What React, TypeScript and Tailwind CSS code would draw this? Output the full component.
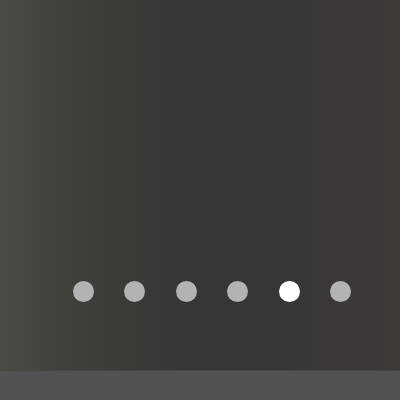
export default function App() {
    const dots = [0, 1, 2, 3, 4, 5];
    const active = 4;

    return (
        <div className="w-[400px] h-[400px] flex flex-col overflow-hidden">
            {/* Slide area */}
            <div className="h-[370px] flex flex-col justify-end pb-[68px] bg-[linear-gradient(90deg,#4a4a45_0%,#3e3e3c_20%,#363636_45%,#373636_70%,#3c3939_100%)]">
                <div className="flex items-center gap-[30.5px] pl-[72.5px]">
                    {dots.map((d) => (
                        <div
                            key={d}
                            className={`w-[21px] h-[21px] rounded-full ${d === active ? "bg-white" : "bg-[#b3b3b3]"}`}
                        />
                    ))}
                </div>
            </div>

            {/* Bottom bar */}
            <div className="flex-1 bg-[#525252] border-t border-[#454545]" />
        </div>
    );
}
